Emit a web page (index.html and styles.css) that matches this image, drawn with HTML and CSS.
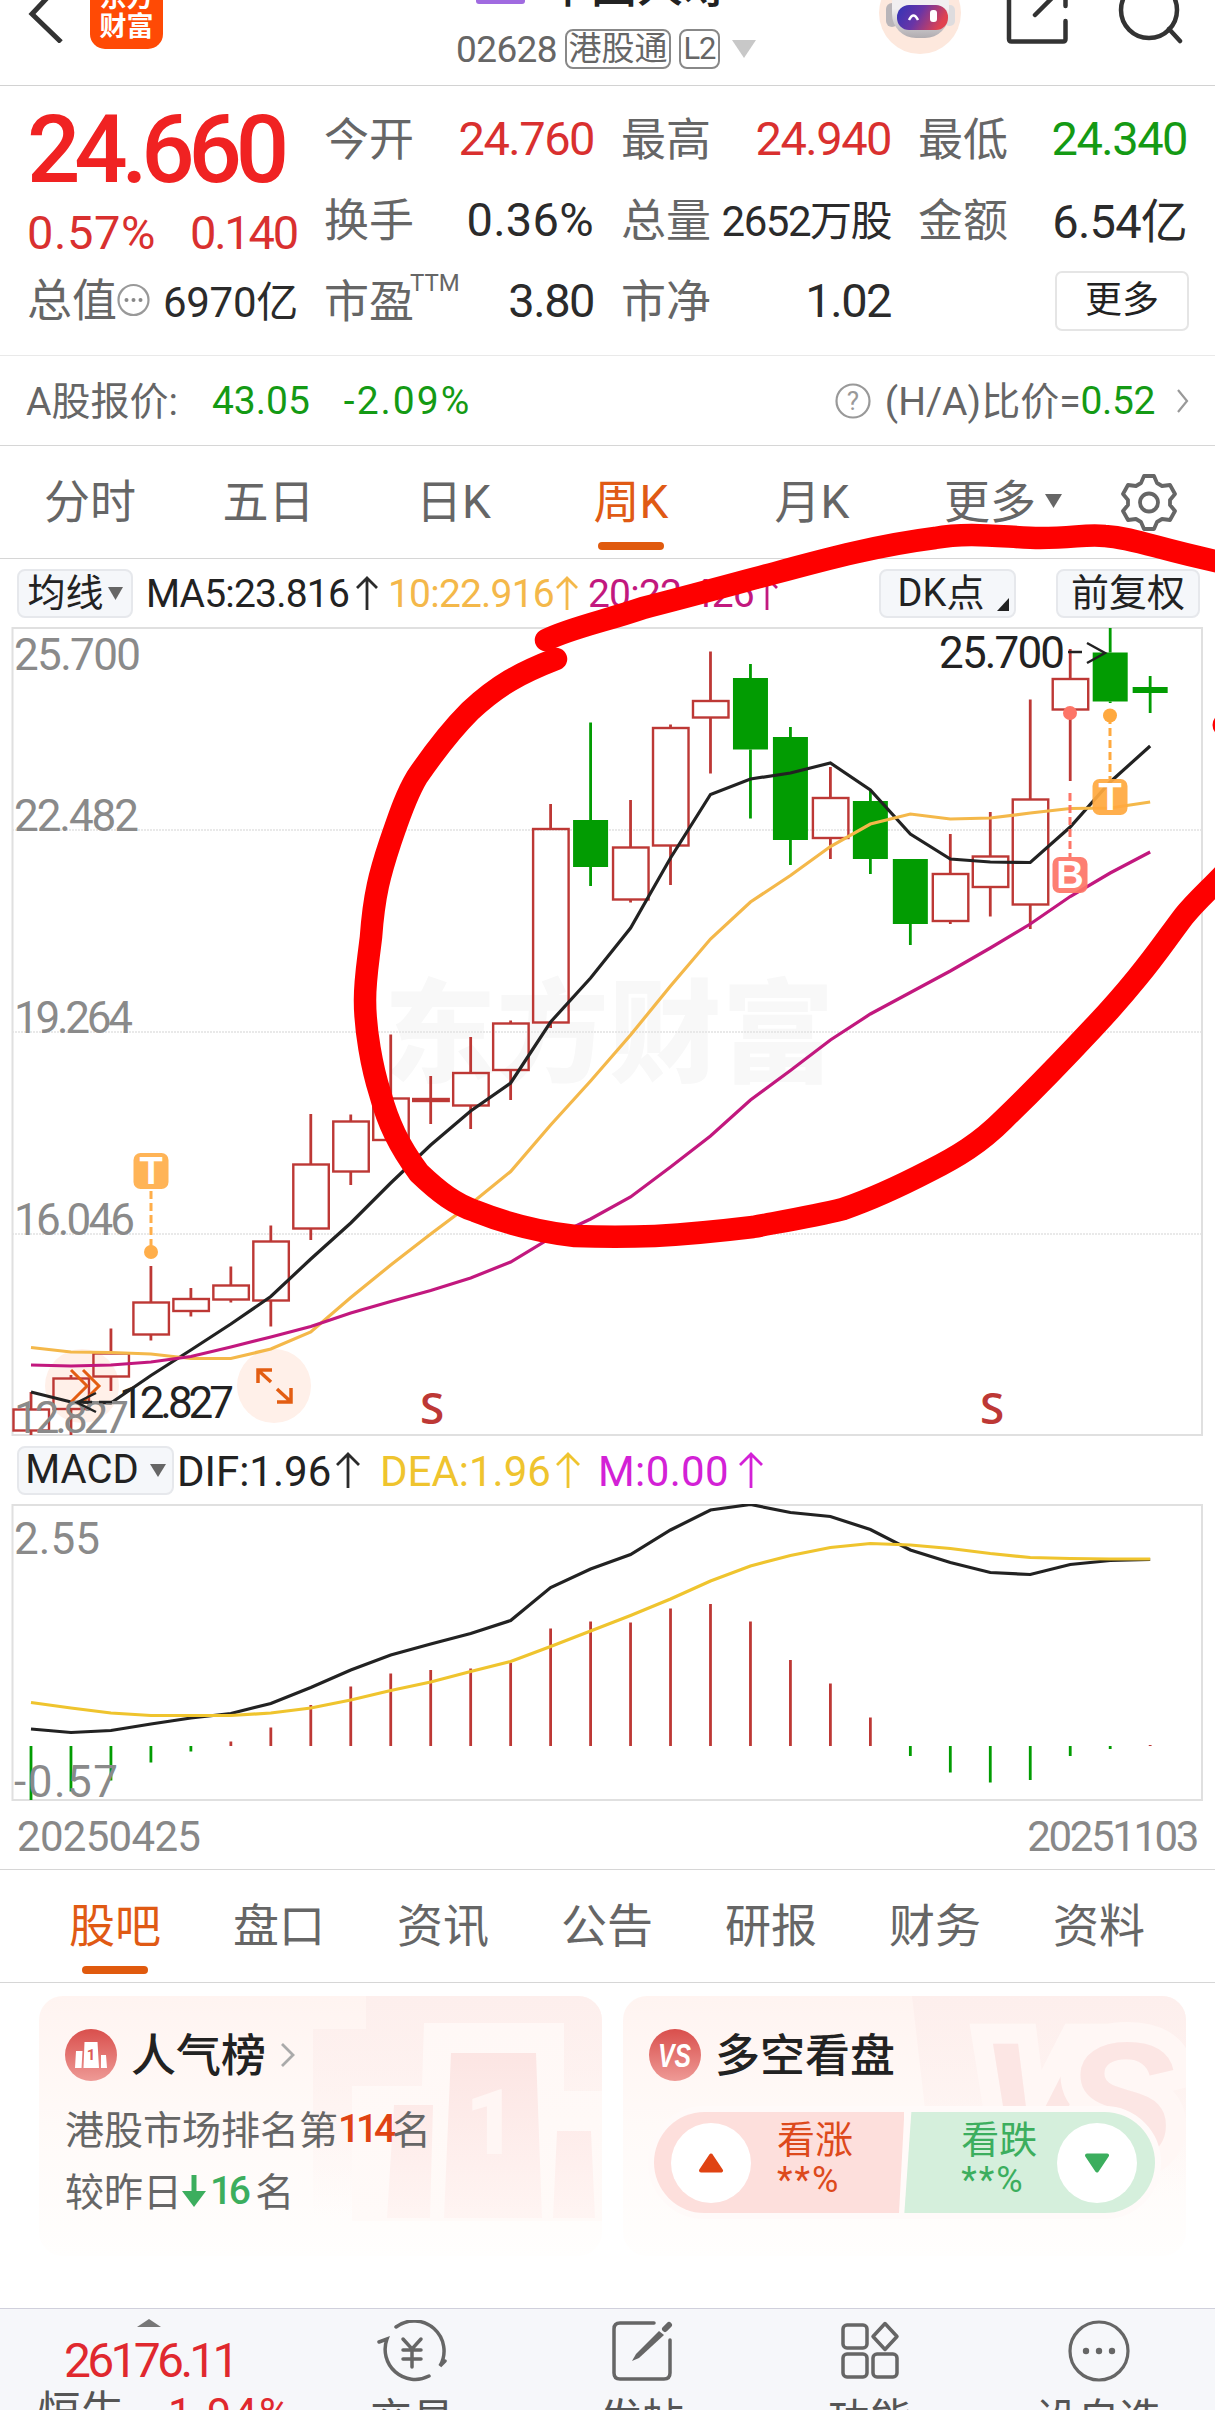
FILE: index.html
```html
<!DOCTYPE html>
<html lang="zh-CN">
<head>
    <meta charset="UTF-8">
    <meta name="viewport" content="width=device-width, initial-scale=1.0">
    <title>中国人寿 02628</title>
    <link rel="stylesheet" href="styles.css">
</head>
<body>
    <div class="app-container">
        <div class="header">
            <div class="header-left">
                <svg class="back" width="36" height="64" viewBox="0 0 36 64"><path d="M33 4 L4 35 L33 63" fill="none" stroke="#333" stroke-width="5"/></svg>
                <div class="logo">东方<br>财富</div>
            </div>
            <div class="header-title">
                <div class="name-row"><span class="hk-tag">HK</span><span class="name">中国人寿</span></div>
                <div class="code-row">
                    <span class="code">02628</span>
                    <span class="box">港股通</span>
                    <span class="box l2">L2</span>
                    <svg width="24" height="18" viewBox="0 0 24 18"><path d="M0 0h24L12 18z" fill="#c8c8c8"/></svg>
                </div>
            </div>
            <div class="header-right">
                <svg width="84" height="84" viewBox="0 0 84 84">
                    <defs>
                        <linearGradient id="face" x1="0" y1="0" x2="1" y2="0.3"><stop offset="0" stop-color="#3034b8"/><stop offset="0.5" stop-color="#6a35a6"/><stop offset="1" stop-color="#e04250"/></linearGradient>
                        <linearGradient id="head" x1="0" y1="0" x2="0" y2="1"><stop offset="0.5" stop-color="#f1eff1"/><stop offset="1" stop-color="#b0acb0"/></linearGradient>
                    </defs>
                    <circle cx="42" cy="42" r="41" fill="#fde8dd"/>
                    <rect x="8" y="32" width="12" height="24" rx="6" fill="#b9b5b9"/>
                    <rect x="66" y="34" width="11" height="21" rx="5" fill="#dedcde"/>
                    <rect x="14" y="8" width="57" height="59" rx="24" fill="url(#head)"/>
                    <rect x="19" y="34" width="51" height="25" rx="12" fill="url(#face)"/>
                    <path d="M31 49 q4.500 -9 9 0" fill="none" stroke="#fff" stroke-width="2.500"/>
                    <rect x="52" y="39" width="7" height="12" rx="3" fill="#fff"/>
                </svg>
                <svg width="64" height="64" viewBox="0 0 64 64"><path d="M24 4H4V59Q4 61.500 6.500 61.500H58Q60.500 61.500 60.500 59V41M30 35L60 5M60.500 4V26" fill="none" stroke="#333" stroke-width="4.500" stroke-linecap="round"/></svg>
                <svg width="66" height="66" viewBox="0 0 66 66"><circle cx="32" cy="32" r="28" fill="none" stroke="#333" stroke-width="4.500"/><path d="M52 51L63 63" stroke="#333" stroke-width="4.500" stroke-linecap="round"/></svg>
            </div>
        </div>

        <div class="quote">
            <div class="quote-main">
                <div class="price">24.660</div>
                <div class="change"><span>0.57%</span><span class="diff">0.140</span></div>
                <div class="cap">
                    <span class="label">总值</span>
                    <svg width="33" height="34" viewBox="0 0 33 34"><circle cx="16.500" cy="17" r="15" fill="none" stroke="#999" stroke-width="2.200"/><circle cx="9.500" cy="17" r="2" fill="#888"/><circle cx="16.500" cy="17" r="2" fill="#888"/><circle cx="23.500" cy="17" r="2" fill="#888"/></svg>
                    <span class="value">6970亿</span>
                </div>
            </div>
            <div class="quote-grid">
                <div class="cell"><span class="label">今开</span><span class="value up">24.760</span></div>
                <div class="cell"><span class="label">最高</span><span class="value up">24.940</span></div>
                <div class="cell"><span class="label">最低</span><span class="value down">24.340</span></div>
                <div class="cell"><span class="label">换手</span><span class="value pct">0.36%</span></div>
                <div class="cell"><span class="label">总量</span><span class="value small">2652万股</span></div>
                <div class="cell"><span class="label">金额</span><span class="value han">6.54亿</span></div>
                <div class="cell"><span class="label">市盈<sup>TTM</sup></span><span class="value">3.80</span></div>
                <div class="cell"><span class="label">市净</span><span class="value">1.02</span></div>
                <div class="cell"><button class="more-btn">更多</button></div>
            </div>
        </div>

        <div class="a-share">
            <span class="han-text">A股报价:</span>
            <span class="down a-price">43.05</span>
            <span class="down a-pct">-2.09%</span>
            <div class="ratio">
                <svg width="36" height="36" viewBox="0 0 36 36"><circle cx="18" cy="18" r="16.500" fill="none" stroke="#999" stroke-width="2.200"/><text x="18" y="27" text-anchor="middle" class="q-mark">?</text></svg>
                <span class="ratio-label han-text">(H/A)比价=</span><span class="down ratio-num">0.52</span>
                <svg class="arrow" width="12" height="24" viewBox="0 0 12 24"><path d="M1 1L10 12L1 23" fill="none" stroke="#999" stroke-width="2.200"/></svg>
            </div>
        </div>

        <div class="period-tabs">
            <span>分时</span>
            <span>五日</span>
            <span>日K</span>
            <span class="active">周K</span>
            <span>月K</span>
            <span>更多<svg class="tri" width="17" height="14" viewBox="0 0 17 14"><path d="M0 0h17L8.500 14z" fill="#666"/></svg></span>
            <span><svg width="58" height="58" viewBox="0 0 58 58"><path d="M24 3h10l3 7 5 3 8-1 5 9-5 6v5l5 6-5 9-8-1-5 3-3 7H24l-3-7-5-3-8 1-5-9 5-6v-5l-5-6 5-9 8 1 5-3z" fill="none" stroke="#666" stroke-width="3.800" stroke-linejoin="round"/><circle cx="29" cy="29.500" r="9" fill="none" stroke="#666" stroke-width="3.800"/></svg></span>
        </div>

        <div class="toolbar ma-bar">
            <button class="tool-btn avg-btn">均线<svg width="15" height="13" viewBox="0 0 15 13"><path d="M0 0h15L7.500 13z" fill="#666"/></svg></button>
            <span class="ma ma5">MA5:23.816</span><svg class="up-arrow" width="24" height="34" viewBox="0 0 24 34"><path d="M12 34V2M2 12L12 2L22 12" fill="none" stroke="#2b2b2b" stroke-width="2.800"/></svg>
            <span class="ma ma10">10:22.916</span><svg class="up-arrow" width="24" height="34" viewBox="0 0 24 34"><path d="M12 34V2M2 12L12 2L22 12" fill="none" stroke="#f4b84a" stroke-width="2.800"/></svg>
            <span class="ma ma20">20:22.426</span><svg class="up-arrow" width="24" height="34" viewBox="0 0 24 34"><path d="M12 34V2M2 12L12 2L22 12" fill="none" stroke="#c2187e" stroke-width="2.800"/></svg>
            <button class="tool-btn dk-btn">DK点<svg width="12" height="13" viewBox="0 0 12 13"><path d="M12 0V13H0z" fill="#222"/></svg></button>
            <button class="tool-btn fq-btn">前复权</button>
        </div>

        <svg class="chart" id="kline" width="1215" height="809" viewBox="0 627 1215 809"></svg>

        <div class="toolbar macd-bar">
            <button class="tool-btn macd-btn">MACD<svg width="16" height="13" viewBox="0 0 16 13"><path d="M0 0h16L8 13z" fill="#666"/></svg></button>
            <span class="ind dif">DIF:1.96</span><svg class="up-arrow" width="26" height="36" viewBox="0 0 26 36"><path d="M13 36V2M2 13L13 2L24 13" fill="none" stroke="#2b2b2b" stroke-width="2.800"/></svg>
            <span class="ind dea">DEA:1.96</span><svg class="up-arrow" width="26" height="36" viewBox="0 0 26 36"><path d="M13 36V2M2 13L13 2L24 13" fill="none" stroke="#efc42e" stroke-width="2.800"/></svg>
            <span class="ind m">M:0.00</span><svg class="up-arrow" width="26" height="36" viewBox="0 0 26 36"><path d="M13 36V2M2 13L13 2L24 13" fill="none" stroke="#d321d6" stroke-width="2.800"/></svg>
        </div>

        <svg class="chart" id="macd" width="1215" height="298" viewBox="0 1504 1215 298"></svg>

        <div class="dates"><span>20250425</span><span class="end">20251103</span></div>

        <div class="info-tabs">
            <span class="active">股吧</span>
            <span>盘口</span>
            <span>资讯</span>
            <span>公告</span>
            <span>研报</span>
            <span>财务</span>
            <span>资料</span>
        </div>

        <div class="cards">
            <div class="card">
                <svg class="card-bg" width="563" height="260" viewBox="0 0 563 260">
                    <defs>
                        <linearGradient id="fade" gradientUnits="userSpaceOnUse" x1="0" y1="55" x2="0" y2="225"><stop offset="0" stop-color="#fce5e3"/><stop offset="1" stop-color="#fff5f3"/></linearGradient>
                        <linearGradient id="shade" x1="0" y1="0" x2="0" y2="1"><stop offset="0" stop-color="#fdefed"/><stop offset="1" stop-color="#fdefed" stop-opacity="0"/></linearGradient>
                        <linearGradient id="light" x1="0" y1="0" x2="0" y2="1"><stop offset="0" stop-color="#fff8f6"/><stop offset="1" stop-color="#fffaf8"/></linearGradient>
                    </defs>
                    <path d="M327 0H563V220H274V33H327z" fill="url(#shade)"/>
                    <path d="M385 27H525V95H563V225H313V90H383z" fill="url(#light)"/>
                    <path d="M412 57H497L503 222H405zM355 109H394L391 222H348zM518 135H552L556 222H514z" fill="url(#fade)"/>
                    <text x="452" y="158" class="podium-num">1</text>
                </svg>
                <div class="card-title">
                    <svg width="52" height="52" viewBox="0 0 52 52">
                        <defs><linearGradient id="ball" x1="0" y1="0" x2="0" y2="1"><stop offset="0" stop-color="#d94f4c"/><stop offset="1" stop-color="#ee9a96"/></linearGradient></defs>
                        <circle cx="26" cy="26" r="26" fill="url(#ball)"/>
                        <path d="M11 22h6.500l-1 17H10zM19.500 13h13l1.500 26H18.500zM36 26h5l1 13h-6z" fill="#fff"/>
                        <text x="26" y="31" class="ball-num">1</text>
                    </svg>
                    <span>人气榜</span>
                    <svg class="arrow" width="16" height="26" viewBox="0 0 16 26"><path d="M2 2L13 13L2 24" fill="none" stroke="#aaa" stroke-width="2.800"/></svg>
                </div>
                <div class="rank-line">港股市场排名第<b>114</b>名</div>
                <div class="rank-line second">较昨日<svg width="24" height="32" viewBox="0 0 24 32"><path d="M9.500 0h5v16H24L12 32L0 16h9.500z" fill="#3cae5e"/></svg><b class="green">16</b>名</div>
            </div>
            <div class="card">
                <svg class="card-bg" width="563" height="260" viewBox="0 0 563 260">
                    <path d="M289 0H563V200H312z" fill="url(#shade)"/>
                    <text x="356" y="164" textLength="196" class="vs-bg">VS</text>
                </svg>
                <div class="card-title">
                    <svg width="52" height="52" viewBox="0 0 52 52"><circle cx="26" cy="26" r="26" fill="url(#ball)"/><text x="9" y="38" textLength="33" lengthAdjust="spacingAndGlyphs" class="vs">VS</text></svg>
                    <span>多空看盘</span>
                </div>
                <div class="vote">
                    <div class="bull">
                        <span class="knob"><svg width="26" height="20" viewBox="0 0 26 20"><path d="M13 2.500L23 17.500H3z" fill="#e04313" stroke="#e04313" stroke-width="4" stroke-linejoin="round"/></svg></span>
                        <span class="vote-text">看涨<br><i>**%</i></span>
                    </div>
                    <div class="bear">
                        <span class="vote-text">看跌<br><i>**%</i></span>
                        <span class="knob"><svg width="26" height="20" viewBox="0 0 26 20"><path d="M13 17.500L23 2.500H3z" fill="#3cae5e" stroke="#3cae5e" stroke-width="4" stroke-linejoin="round"/></svg></span>
                    </div>
                </div>
            </div>
        </div>

        <div class="nav-bar">
            <div class="index">
                <svg width="24" height="8" viewBox="0 0 24 8"><path d="M12 0L24 8H0z" fill="#777"/></svg>
                <div class="index-num">26176.11</div>
                <div class="index-name"><span>恒生</span><span class="index-pct">1.94%</span></div>
            </div>
            <a><svg width="72" height="62" viewBox="0 0 72 62"><g fill="none" stroke="#666" stroke-width="3.500" stroke-linecap="round"><path d="M20 7A30 30 0 0 1 64 46L69 41M53 56A30 30 0 0 1 11 19L3 22"/><path d="M27 19l9 10 9-10M36 29v18M27 30h18M27 39h18"/></g></svg><span>交易</span></a>
            <a><svg width="62" height="62" viewBox="0 0 62 62"><path d="M43 3H9Q3 3 3 9V53Q3 59 9 59H53Q59 59 59 53V20" fill="none" stroke="#666" stroke-width="3.500" stroke-linecap="round"/><path d="M48 11L53 15L28 38L21 41L25 34z" fill="#666"/><path d="M54 9L58 5" stroke="#666" stroke-width="6" stroke-linecap="round"/></svg><span>发帖</span></a>
            <a><svg width="62" height="62" viewBox="0 0 62 62"><g fill="none" stroke="#666" stroke-width="3.500"><rect x="4" y="5" width="24" height="23" rx="4"/><rect x="4" y="34" width="24" height="23" rx="4"/><rect x="34" y="34" width="24" height="23" rx="4"/><path d="M46 3.500L58 16.500L46 29.500L34 16.500z" stroke-linejoin="round"/></g></svg><span>功能</span></a>
            <a><svg width="62" height="62" viewBox="0 0 62 62"><circle cx="31" cy="31" r="29" fill="none" stroke="#666" stroke-width="3.200"/><circle cx="18" cy="31" r="3.200" fill="#666"/><circle cx="31" cy="31" r="3.200" fill="#666"/><circle cx="44" cy="31" r="3.200" fill="#666"/></svg><span>设自选</span></a>
        </div>

        <!-- hand-drawn marker over the chart -->
        <svg class="marker" width="1215" height="2410" viewBox="0 0 1215 2410">
            <path d="M546 640C570 628 605 621 643 608C690 596 730 585 775 573C830 558 880 545 935 538C970 531 1010 538 1040 538C1075 538 1085 534 1105 536C1135 538 1160 550 1225 563"/>
            <path d="M556 659C520 673 498 685 470 711C452 729 430 758 417 777C405 797 398 820 390 843C380 873 374 895 371 937C367 970 365 980 365 1000C365 1030 372 1068 380 1093C388 1123 399 1146 419 1173C440 1193 455 1204 475 1211C505 1223 540 1232 575 1236C600 1237 630 1237 655 1236C690 1234 720 1231 753 1227C785 1221 815 1216 843 1209C875 1198 900 1186 929 1171C957 1157 980 1143 1003 1120C1032 1092 1065 1058 1093 1028C1110 1010 1124 994 1137 978C1157 954 1168 937 1184 916C1196 901 1210 889 1224 874"/>
            <circle class="dot" cx="1224" cy="725" r="11.500"/>
        </svg>
    </div>
    <script src="script.js"></script>
</body>
</html>
```
FILE: styles.css
```css
* {
    margin: 0;
    padding: 0;
    box-sizing: border-box;
}

body {
    background-color: #fff;
    font-family: Roboto, 'Noto Sans CJK SC', sans-serif;
    color: #333;
}

button {
    font-family: inherit;
    color: #222;
}

svg {
    display: block;
    flex-shrink: 0;
}

.app-container {
    position: relative;
    width: 1215px;
    height: 2410px;
    overflow: hidden;
    white-space: nowrap;
}

.up {
    color: #d9302f !important;
}

.down {
    color: #149a14 !important;
}

/* header */
.header {
    height: 86px;
    border-bottom: 1px solid #d2d2d2;
    display: grid;
    grid-template-columns: 400px 415px 400px;
    overflow: hidden;
}

.header-left {
    display: flex;
    padding-left: 28px;
}

.back {
    margin-top: -21px;
}

.logo {
    width: 73px;
    height: 76px;
    margin: -27px 0 0 26px;
    padding-top: 11px;
    border-radius: 15px;
    background-color: #ff4a05;
    color: #fff;
    font-size: 27px;
    font-weight: 700;
    line-height: 29px;
    text-align: center;
}

.header-title {
    padding-left: 56px;
}

.name-row {
    display: flex;
    height: 66px;
    margin-top: -47px;
    padding-left: 20px;
    gap: 20px;
}

.hk-tag {
    width: 49px;
    height: 34px;
    margin-top: 17px;
    background-color: #a06be0;
    color: #fff;
    font-size: 24px;
    line-height: 30px;
    text-align: center;
    border-radius: 3px;
}

.name {
    font-size: 46px;
    font-weight: 500;
    line-height: 66px;
    color: #222;
}

.code-row {
    display: flex;
    align-items: center;
    height: 40px;
    margin-top: 10px;
    color: #666;
    gap: 8px;
}

.code {
    font-size: 37px;
    letter-spacing: -0.6px;
}

.box {
    width: 106px;
    height: 40px;
    border: 2px solid #888;
    border-radius: 8px;
    font-size: 33px;
    line-height: 35px;
    text-align: center;
}

.box.l2 {
    width: 41px;
    font-size: 31px;
    letter-spacing: -1px;
}

.code-row svg {
    margin-left: 4px;
}

.header-right {
    display: flex;
    padding-left: 63px;
}

.header-right svg:nth-child(1) {
    margin-top: -29px;
}

.header-right svg:nth-child(2) {
    margin: -20px 0 0 43px;
}

.header-right svg:nth-child(3) {
    margin: -22px 0 0 48px;
}

/* quote */
.quote {
    display: flex;
    height: 270px;
    border-bottom: 1px solid #e9e9e9;
    padding: 13px 24px 0 27px;
}

.quote-main {
    width: 297px;
}

.price {
    height: 98px;
    margin-top: 2px;
    color: #f02222;
    font-size: 94px;
    font-weight: 500;
    line-height: 98px;
    letter-spacing: -6.2px;
}

.change {
    display: flex;
    justify-content: space-between;
    width: 270px;
    margin-top: 6px;
    color: #d9302f;
    font-size: 47px;
    line-height: 56px;
    letter-spacing: 0.6px;
}

.change .diff {
    letter-spacing: -2.2px;
}

.cap {
    display: flex;
    align-items: center;
    height: 80px;
    margin-top: -1px;
}

.label {
    padding-bottom: 5px;
    color: #666;
    font-size: 45px;
}

.cap .value {
    margin-left: 13px;
    padding-bottom: 3px;
    font-size: 42px;
    letter-spacing: -0.3px;
}

.quote-grid {
    flex: 1;
    display: grid;
    grid-template-columns: 270px 270px 269px;
    grid-template-rows: 80px 81px 81px;
    column-gap: 27px;
}

.cell {
    position: relative;
    display: flex;
    justify-content: space-between;
    align-items: center;
}

.value {
    color: #2b2b2b;
    font-size: 47px;
    letter-spacing: -1.5px;
}

.value.up,
.value.down {
    padding-bottom: 2px;
}

.value.pct {
    letter-spacing: 0.3px;
}

.value.small {
    padding-bottom: 5px;
    font-size: 42px;
}

.value.han {
    padding-bottom: 5px;
    letter-spacing: -0.8px;
}

.cell sup {
    position: absolute;
    top: 9px;
    left: 86px;
    font-size: 24px;
    line-height: 28px;
}

.more-btn {
    width: 134px;
    height: 60px;
    margin: 0 -2px 0 auto;
    background-color: #fff;
    border: 2px solid #e5e5e5;
    border-radius: 7px;
    font-size: 37px;
    line-height: 50px;
}

/* A share row */
.a-share {
    display: flex;
    align-items: center;
    height: 90px;
    padding: 0 26px;
    border-bottom: 1px solid #d6d6d6;
    color: #666;
    font-size: 39px;
}

.han-text {
    padding-bottom: 5px;
}

.a-price {
    margin-left: 34px;
}

.a-pct {
    margin-left: 34px;
    letter-spacing: 2px;
}

.ratio {
    display: flex;
    align-items: center;
    margin-left: auto;
}

.ratio-label {
    margin-left: 14px;
}

.ratio-num {
    letter-spacing: -0.4px;
}

.q-mark {
    font-size: 26px;
    fill: #999;
}

.ratio .arrow {
    margin-left: 22px;
}

/* period tabs */
.period-tabs {
    display: grid;
    grid-template-columns: 180px 177px 193px 162px 200px 182px 109px;
    height: 113px;
    border-bottom: 1px solid #d6d6d6;
}

.period-tabs span,
.info-tabs span {
    position: relative;
    display: flex;
    justify-content: center;
    align-items: center;
    padding-bottom: 8px;
    color: #666;
    font-size: 46px;
}

.period-tabs span:last-child {
    padding-bottom: 0;
}

.period-tabs .tri {
    margin: 5px 0 0 9px;
}

.period-tabs span.active,
.info-tabs span.active {
    color: #e05a14;
}

.period-tabs .active::after,
.info-tabs .active::after {
    content: '';
    position: absolute;
    bottom: 8px;
    left: calc(50% - 33px);
    width: 66px;
    height: 8px;
    border-radius: 4px;
    background-color: #e05a0e;
}

/* toolbars */
.toolbar {
    display: flex;
    align-items: center;
    height: 68px;
    padding: 0 15px 0 17px;
}

.tool-btn {
    display: flex;
    align-items: center;
    justify-content: center;
    height: 49px;
    background-color: #f5f7fa;
    border: 2px solid #e6e8ec;
    border-radius: 8px;
    font-size: 38px;
    line-height: 44px;
}

.avg-btn {
    width: 116px;
    gap: 4px;
}

.ma {
    padding-top: 2px;
    font-size: 39px;
    letter-spacing: -0.8px;
}

.ma5 {
    width: 202px;
    margin-left: 13px;
    color: #222;
}

.ma10 {
    width: 164px;
    margin-left: 9px;
    color: #f4b84a;
}

.ma20 {
    width: 164px;
    margin-left: 9px;
    color: #c2187e;
}

.ma-bar .up-arrow {
    margin-left: 7px;
}

.ma-bar .ma10 + .up-arrow,
.ma-bar .ma20 + .up-arrow {
    margin-left: 3px;
}

.dk-btn {
    width: 137px;
    margin-left: auto;
    margin-right: 40px;
    padding-left: 12px;
    gap: 13px;
}

.dk-btn svg {
    margin-top: 22px;
}

.fq-btn {
    width: 144px;
}

.macd-btn {
    width: 157px;
    gap: 11px;
    font-size: 40px;
}

.ind {
    padding-top: 2px;
    font-size: 42px;
}

.dif {
    width: 148px;
    margin-left: 3px;
    color: #222;
}

.dea {
    width: 168px;
    margin-left: 19px;
    color: #efc42e;
}

.m {
    width: 130px;
    margin-left: 17px;
    color: #d321d6;
    letter-spacing: 0.4px;
}

.macd-bar .up-arrow {
    margin-left: 10px;
}

.macd-bar .dea + .up-arrow {
    margin-left: 7px;
}

/* charts */
.chart text {
    font-size: 44px;
    fill: #8a8a8a;
}

.chart .watermark {
    font-family: 'Noto Sans CJK SC', sans-serif;
    font-size: 112px;
    font-weight: 900;
    fill: #f8f8f8;
}

.chart .note {
    fill: #222;
}

.chart .s-mark {
    font-family: 'Open Sans', sans-serif;
    font-weight: 600;
    font-size: 44px;
    fill: #bd3835;
}

.chart .badge {
    font-family: 'Liberation Sans', sans-serif;
    font-size: 38px;
    font-weight: 700;
    fill: #fff;
    text-anchor: middle;
}

.dates {
    display: flex;
    justify-content: space-between;
    align-items: center;
    height: 68px;
    padding: 1px 18px 0 17px;
    border-bottom: 1px solid #d6d6d6;
    color: #888;
    font-size: 42px;
    letter-spacing: -0.7px;
}

.dates .end {
    letter-spacing: -2.4px;
}

/* info tabs */
.info-tabs {
    display: grid;
    grid-template-columns: repeat(7, 164px);
    height: 113px;
    padding-left: 33px;
    border-bottom: 1px solid #d6d6d6;
}

/* cards */
.cards {
    display: flex;
    gap: 21px;
    height: 325px;
    padding: 13px 29px 0 39px;
}

.card {
    position: relative;
    width: 563px;
    height: 260px;
    padding: 33px 26px 0;
    border-radius: 24px;
    overflow: hidden;
    background: linear-gradient(#fff4f1, #fffaf8 50%, #fffefd);
}

.card-bg {
    position: absolute;
    top: 0;
    left: 0;
}

.podium-num {
    font-size: 90px;
    font-weight: 900;
    fill: #fff6f4;
    text-anchor: middle;
}

.vs-bg {
    font-family: 'Liberation Sans', sans-serif;
    font-size: 168px;
    font-weight: 700;
    font-style: italic;
    fill: #fce6e4;
    stroke: #fff7f5;
    stroke-width: 40px;
    paint-order: stroke;
}

.ball-num {
    font-size: 15px;
    font-weight: 700;
    fill: #dd5a57;
    text-anchor: middle;
}

.vs {
    font-family: 'Liberation Sans', sans-serif;
    font-size: 34px;
    font-weight: 700;
    font-style: italic;
    fill: #fff;
}

.card-title {
    position: relative;
    display: flex;
    align-items: center;
    height: 52px;
    gap: 14px;
    font-size: 45px;
    font-weight: 500;
    color: #222;
}

.card-title span {
    padding-bottom: 6px;
}

.rank-line {
    position: relative;
    display: flex;
    align-items: center;
    height: 62px;
    margin-top: 15px;
    font-size: 39px;
    color: #666;
}

.rank-line.second {
    margin-top: 0;
}

.rank-line b {
    color: #e04313;
    font-weight: 500;
    letter-spacing: -4.2px;
    padding-top: 4px;
}

.rank-line b.green {
    color: #3cae5e;
    letter-spacing: -3.5px;
    margin: 0 8px 0 4px;
}

.rank-line svg {
    margin-top: 4px;
}

.vote {
    position: relative;
    display: flex;
    width: 513px;
    height: 113px;
    margin: 25px 0 0 -1px;
    border: 6px solid #fffaf9;
    border-radius: 57px;
    overflow: hidden;
    background-color: #fffaf9;
}

.bull,
.bear {
    display: flex;
    align-items: center;
    width: 252px;
    height: 101px;
}

.bull {
    padding-left: 17px;
    gap: 26px;
    background-color: #fddfdc;
    clip-path: polygon(0 0, 100% 0, 245px 100%, 0 100%);
    color: #dd4a1c;
}

.bear {
    padding-left: 57px;
    gap: 20px;
    background-color: #d5efdc;
    clip-path: polygon(7px 0, 100% 0, 100% 100%, 0 100%);
    color: #3cae5e;
}

.knob {
    display: flex;
    align-items: center;
    justify-content: center;
    width: 80px;
    height: 80px;
    border-radius: 50%;
    background-color: #fff;
}

.vote-text {
    padding-bottom: 5px;
    font-size: 38px;
    line-height: 39px;
}

.vote-text i {
    font-style: normal;
    font-size: 36px;
    letter-spacing: 2px;
}

/* bottom bar */
.nav-bar {
    display: grid;
    grid-template-columns: 298px 228px 232px 224px 233px;
    height: 120px;
    background-color: #f6f7fa;
    border-top: 1px solid #d0d0dc;
}

.nav-bar a {
    display: flex;
    flex-direction: column;
    align-items: center;
    padding-top: 11px;
    font-size: 42px;
    line-height: 50px;
    color: #555;
}

.nav-bar a span {
    margin-top: 13px;
}

.index {
    padding-top: 10px;
}

.index svg {
    margin-left: 137px;
}

.index-num {
    margin-left: 64px;
    color: #e0282e;
    font-size: 48px;
    line-height: 58px;
    margin-top: 5px;
    letter-spacing: -3.7px;
}

.index-name {
    display: flex;
    margin-left: 38px;
    margin-top: -3px;
    font-size: 43px;
    line-height: 50px;
    color: #555;
}

.index-pct {
    margin: 1px 0 0 44px;
    color: #e0282e;
    letter-spacing: 1.8px;
}

.marker {
    position: absolute;
    top: 0;
    left: 0;
    pointer-events: none;
}

.marker path {
    fill: none;
    stroke: #fe0000;
    stroke-width: 22.5px;
    stroke-linecap: round;
    stroke-linejoin: round;
}

.marker .dot {
    fill: #fe0000;
}
```
FILE: script.js
```javascript
const RED = '#bd3835';
const GREEN = '#029c02';
const x = i => 31 + i * 39.97;

// [body top, body bottom, wick top, wick bottom, 1 = falling]
const candles = [
    [1409.5, 1430.5, 1392, 1435], [1378.5, 1409, 1375, 1435], [1353.5, 1376.5, 1328.5, 1391],
    [1302.5, 1334.5, 1266, 1340.5], [1299, 1311, 1288, 1316.5], [1285.5, 1299.5, 1266.5, 1302.5],
    [1241.5, 1300.5, 1225.5, 1326.5], [1164.5, 1228.5, 1114, 1240], [1121.5, 1171.5, 1114.5, 1185],
    [1098.5, 1140, 1034.5, 1140], [1099, 1101, 1076, 1124], [1073, 1105.5, 1037, 1129],
    [1023.5, 1070, 1020.5, 1100], [829, 1022.5, 804, 1028], [820, 867, 722.5, 886, 1],
    [847.5, 899.5, 800, 902.5], [728, 845.5, 724.5, 885], [701, 717.5, 651.5, 773.5],
    [678, 749.5, 664, 818.5, 1], [737, 840, 727, 865, 1], [798, 838, 767, 859],
    [801, 859, 791, 874, 1], [859, 924, 859, 945, 1], [874, 921, 834, 924],
    [856.5, 887, 812, 916.5], [799.5, 904.5, 699.5, 929], [679, 709.5, 649, 781],
    [652.5, 701.5, 628, 703, 1], [687, 693, 676, 713, 1]
];

const ma5 = [1392, 1402, 1403, 1375.5, 1350, 1324, 1296.5, 1259, 1223, 1183, 1145, 1111, 1083, 1022, 978, 928, 858, 794.5, 779, 773, 763, 790, 834, 859, 862, 862.5, 827, 782, 746];
const ma10 = [1347.5, 1352, 1352.5, 1354, 1358.5, 1358.5, 1349, 1332, 1297.5, 1265, 1234, 1204, 1171.5, 1125, 1081, 1035, 986, 939, 902, 875.5, 846.5, 824, 814, 819, 818, 813, 808.5, 808, 802];
const ma20 = [1365, 1366, 1365, 1362, 1356.5, 1347, 1337, 1326.5, 1313, 1301.5, 1290.5, 1278, 1262, 1238, 1219, 1197, 1167, 1136, 1100, 1070.5, 1040, 1014, 992.5, 971, 948, 924, 896.5, 873, 852];

const dif = [1729, 1732.5, 1730.5, 1724, 1718, 1713.5, 1703.5, 1687.5, 1670, 1655, 1644, 1633.5, 1620.5, 1587.5, 1569, 1554.5, 1530, 1510, 1504.5, 1512.5, 1516.5, 1529.5, 1550, 1562.5, 1572.5, 1574.5, 1564.5, 1560.5, 1559.5];
const dea = [1702.5, 1708, 1713, 1715.5, 1715.5, 1715.5, 1713, 1708, 1700, 1690.5, 1682, 1671.5, 1661.5, 1646.5, 1631, 1615.5, 1599, 1581, 1566, 1555.5, 1547.5, 1543.5, 1545, 1548.5, 1553.5, 1557.5, 1558.5, 1559, 1559];
const bars = [1800, 1791.5, 1780.5, 1762.5, 1751.5, 1741.5, 1727.5, 1705, 1686.5, 1673.5, 1670, 1668.5, 1663, 1628.5, 1621.5, 1622.5, 1608.5, 1604, 1621.5, 1660, 1683.5, 1717.5, 1756, 1772.5, 1782.5, 1780, 1756, 1749, 1745];

const line = (data, color) =>
    `<polyline points="${data.map((y, i) => x(i) + ',' + y).join(' ')}" fill="none" stroke="${color}" stroke-width="3.2"/>`;
const vline = (px, y1, y2, color) =>
    `<path d="M${px} ${y1}V${y2}" stroke="${color}" stroke-width="2.8"/>`;
const label = (px, y, w, str, cls = '') =>
    `<text x="${px}" y="${y}" textLength="${w}" class="${cls}">${str}</text>`;

function badge(px, y, letter, color, dot, from, to) {
    return `<circle cx="${px}" cy="${dot}" r="7" fill="${color}"/>
        <path d="M${px} ${from}V${to}" stroke="${color}" stroke-width="3" stroke-dasharray="8 4"/>
        <rect x="${px - 17.5}" y="${y}" width="35" height="36" rx="7" fill="${color}" opacity="0.93"/>
        <text x="${px}" y="${y + 31}" class="badge">${letter}</text>`;
}

function drawKline() {
    let s = '<text x="384" y="1074" textLength="450" class="watermark">东方财富</text>';
    [830, 1032, 1234].forEach(y => {
        s += `<path d="M12 ${y}H1202" stroke="#e2e2e2" stroke-width="1.5" stroke-dasharray="2 1"/>`;
    });
    s += '<rect x="12.5" y="628" width="1189.500" height="807" fill="none" stroke="#e0e0e0" stroke-width="2"/>';

    // floating buttons
    s += '<circle cx="82" cy="1386" r="37" fill="#fff0e9"/><circle cx="274" cy="1386" r="37" fill="#fff0e9"/>';

    candles.forEach(([top, bottom, high, low, fall], i) => {
        const color = fall ? GREEN : RED;
        s += vline(x(i), high, top, color) + vline(x(i), bottom, low, color);
        s += fall
            ? `<rect x="${x(i) - 17.5}" y="${top}" width="35" height="${bottom - top}" fill="${color}"/>`
            : `<rect x="${x(i) - 17.5}" y="${top}" width="35.5" height="${bottom - top}" fill="none" stroke="${color}" stroke-width="2.4"/>`;
    });

    s += line(ma5, '#222') + line(ma10, '#f4b84a') + line(ma20, '#c2187e');
    s += '<path d="M71 1370L87 1386L71 1402M83 1370L99 1386L83 1402" fill="none" stroke="#e35d12" stroke-width="3"/>';
    s += '<path d="M258 1383V1370H272M259 1371L271 1382M277 1389L290 1401M291 1388V1402H277" fill="none" stroke="#e35d12" stroke-width="3.5"/>';

    s += label(14, 670, 127, '25.700') + label(14, 831, 125, '22.482') + label(14, 1033, 119, '19.264')
        + label(14, 1235, 121, '16.046') + label(14, 1433, 115, '12.827');
    s += label(939, 668, 126, '25.700', 'note') + label(119, 1418, 115, '12.827', 'note');
    s += '<path d="M1068 652H1082M1087 643L1105 653L1087 663M112 1402H99M96 1393L77 1402.500L96 1412M77 1402H92" fill="none" stroke="#222" stroke-width="2.500"/>';
    s += '<text x="420" y="1424" class="s-mark">S</text><text x="980" y="1424" class="s-mark">S</text>';

    s += badge(151, 1153, 'T', '#ffae4a', 1252, 1191, 1252);
    s += badge(1070, 857, 'B', '#fd7567', 713, 793, 857);
    s += badge(1110, 779, 'T', '#ffa93f', 715.5, 716, 779);
    document.getElementById('kline').innerHTML = s;
}

function drawMacd() {
    let s = '<rect x="12.500" y="1505" width="1189.500" height="295" fill="none" stroke="#e0e0e0" stroke-width="2"/>';
    s += line(dif, '#222');
    bars.forEach((y, i) => {
        s += vline(x(i), 1746, y, y > 1746 ? GREEN : RED);
    });
    s += line(dea, '#efc42e');
    s += label(14, 1554, 86, '2.55') + label(14, 1797, 104, '-0.57');
    document.getElementById('macd').innerHTML = s;
}

drawKline();
drawMacd();
```
